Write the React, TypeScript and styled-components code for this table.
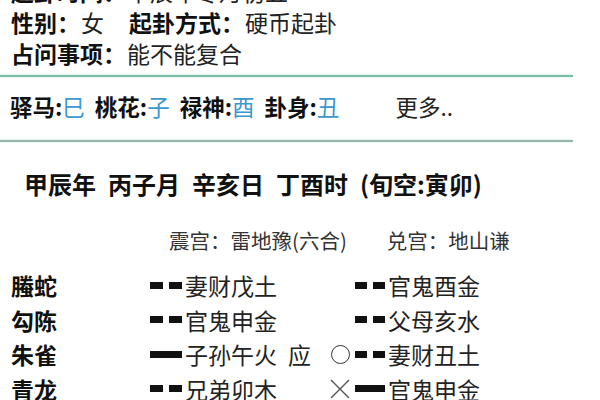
import React from "react";
import styled, { createGlobalStyle } from "styled-components";

const Global = createGlobalStyle`
  html, body { margin: 0; padding: 0; background: #fff; overflow: hidden; }
  body { font-family: "Noto Sans CJK SC", "Noto Sans", sans-serif; color: #222; }
`;

const Page = styled.div`
  width: 600px;
  height: 400px;
  overflow: hidden;
  background: #fff;
`;

const Scroll = styled.div`
  margin-top: -25px;
  display: flex;
  flex-direction: column;
`;

const InfoRow = styled.div`
  display: flex;
  align-items: center;
  height: 31px;
  padding-left: 11px;
  font-size: 23px;
  white-space: nowrap;
`;

const InfoItem = styled.span<{ $gap?: number }>`
  display: inline-flex;
  margin-left: ${(p) => p.$gap ?? 0}px;
`;

const Label = styled.span`
  font-weight: 700;
  color: #111;
`;

const Value = styled.span`
  color: #222;
  margin-left: 1px;
`;

const Divider = styled.div<{ $top: number; $color: string }>`
  margin-top: ${(p) => p.$top}px;
  width: 573px;
  height: 2px;
  background: ${(p) => p.$color};
  box-shadow: 0 -1px 2px rgba(150, 220, 200, 0.35), 0 1px 2px rgba(150, 220, 200, 0.25);
`;

const ShenshaRow = styled.div`
  margin-top: 14px;
  height: 30px;
  display: flex;
  align-items: center;
  padding-left: 10px;
  font-size: 22.5px;
  white-space: nowrap;
`;

const Shensha = styled.span`
  display: inline-flex;
  margin-right: 10px;
`;

const ShenshaKey = styled.span`
  font-weight: 700;
  color: #111;
`;

const ShenshaVal = styled.span`
  color: #3b97cf;
`;

const More = styled.span`
  margin-left: 46px;
  color: #222;
`;

const GanzhiRow = styled.div`
  margin-top: 26px;
  height: 30px;
  display: flex;
  align-items: center;
  gap: 12px;
  padding-left: 24px;
  font-size: 24px;
  font-weight: 700;
  color: #111;
  white-space: nowrap;
`;

const GongRow = styled.div`
  margin-top: 27px;
  height: 30px;
  display: flex;
  align-items: center;
  padding-left: 169px;
  font-size: 20.5px;
  color: #333;
  white-space: nowrap;
`;

const Gong = styled.span<{ $gap?: number }>`
  margin-left: ${(p) => p.$gap ?? 0}px;
`;

const YaoTable = styled.div`
  margin-top: 13px;
  display: flex;
  flex-direction: column;
`;

const YaoRow = styled.div`
  height: 34.5px;
  display: flex;
  align-items: center;
  padding-left: 11px;
  font-size: 23px;
  white-space: nowrap;
`;

const God = styled.span`
  width: 139px;
  font-weight: 700;
  color: #111;
`;

const Line = styled.span<{ $w: number }>`
  width: ${(p) => p.$w}px;
  height: 7px;
  display: inline-flex;
  justify-content: space-between;
  flex-shrink: 0;
`;

const Seg = styled.span<{ $broken: boolean }>`
  height: 100%;
  background: #111;
  width: ${(p) => (p.$broken ? "40%" : "100%")};
`;

const YaoText = styled.span<{ $w?: number }>`
  margin-left: 3px;
  width: ${(p) => (p.$w ? `${p.$w}px` : "auto")};
  color: #222;
`;

const ShiYing = styled.span`
  width: 44px;
  padding-left: 4px;
  color: #222;
  box-sizing: border-box;
`;

const Marker = styled.span`
  width: 24px;
  height: 24px;
  display: inline-flex;
  align-items: center;
  justify-content: center;
  margin-right: 3px;
`;

const Circle = styled.span`
  width: 17px;
  height: 17px;
  border: 1.6px solid #333;
  border-radius: 50%;
`;

type Yao = {
  god: string;
  left: { broken: boolean; text: string };
  shi?: string;
  mark?: "o" | "x";
  right: { broken: boolean; text: string };
};

const yaos: Yao[] = [
  { god: "螣蛇", left: { broken: true, text: "妻财戊土" }, right: { broken: true, text: "官鬼酉金" } },
  { god: "勾陈", left: { broken: true, text: "官鬼申金" }, right: { broken: true, text: "父母亥水" } },
  { god: "朱雀", left: { broken: false, text: "子孙午火" }, shi: "应", mark: "o", right: { broken: true, text: "妻财丑土" } },
  { god: "青龙", left: { broken: true, text: "兄弟卯木" }, mark: "x", right: { broken: false, text: "官鬼申金" } },
];

const YaoLine = ({ broken, w }: { broken: boolean; w: number }) => (
  <Line $w={w}>
    {broken ? (
      <>
        <Seg $broken />
        <Seg $broken />
      </>
    ) : (
      <Seg $broken={false} />
    )}
  </Line>
);

const Cross = () => (
  <svg width="22" height="22" viewBox="0 0 22 22">
    <path d="M2 2 L20 20 M20 2 L2 20" stroke="#555" strokeWidth="1.4" fill="none" />
  </svg>
);

export default function App() {
  return (
    <Page>
      <Global />
      <Scroll>
        <InfoRow>
          <InfoItem>
            <Label>起卦时间：</Label>
            <Value>甲辰年冬月初五</Value>
          </InfoItem>
        </InfoRow>
        <InfoRow>
          <InfoItem>
            <Label>性别：</Label>
            <Value>女</Value>
          </InfoItem>
          <InfoItem $gap={25}>
            <Label>起卦方式：</Label>
            <Value>硬币起卦</Value>
          </InfoItem>
        </InfoRow>
        <InfoRow>
          <InfoItem>
            <Label>占问事项：</Label>
            <Value>能不能复合</Value>
          </InfoItem>
        </InfoRow>
        <Divider $top={7} $color="#79bda6" />
        <ShenshaRow>
          <Shensha>
            <ShenshaKey>驿马:</ShenshaKey>
            <ShenshaVal>巳</ShenshaVal>
          </Shensha>
          <Shensha>
            <ShenshaKey>桃花:</ShenshaKey>
            <ShenshaVal>子</ShenshaVal>
          </Shensha>
          <Shensha>
            <ShenshaKey>禄神:</ShenshaKey>
            <ShenshaVal>酉</ShenshaVal>
          </Shensha>
          <Shensha>
            <ShenshaKey>卦身:</ShenshaKey>
            <ShenshaVal>丑</ShenshaVal>
          </Shensha>
          <More>更多..</More>
        </ShenshaRow>
        <Divider $top={19} $color="#9bb4aa" />
        <GanzhiRow>
          <span>甲辰年</span>
          <span>丙子月</span>
          <span>辛亥日</span>
          <span>丁酉时</span>
          <span>(旬空:寅卯)</span>
        </GanzhiRow>
        <GongRow>
          <Gong>震宫：雷地豫(六合)</Gong>
          <Gong $gap={40}>兑宫：地山谦</Gong>
        </GongRow>
        <YaoTable>
          {yaos.map((y) => (
            <YaoRow key={y.god}>
              <God>{y.god}</God>
              <YaoLine broken={y.left.broken} w={32} />
              <YaoText $w={99}>{y.left.text}</YaoText>
              <ShiYing>{y.shi ?? ""}</ShiYing>
              <Marker>{y.mark === "o" ? <Circle /> : y.mark === "x" ? <Cross /> : null}</Marker>
              <YaoLine broken={y.right.broken} w={30} />
              <YaoText>{y.right.text}</YaoText>
            </YaoRow>
          ))}
        </YaoTable>
      </Scroll>
    </Page>
  );
}
